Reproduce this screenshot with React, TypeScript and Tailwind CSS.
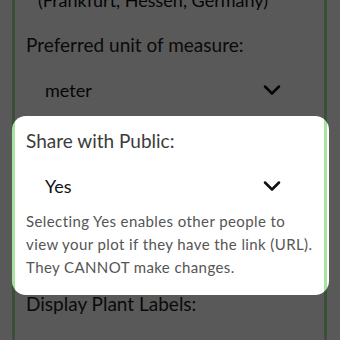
import { ChevronDown } from "lucide-react";

function Select({ value }: { value: string }) {
  return (
    <div className="flex items-center justify-between h-[44px] pl-[19px] pr-[27px] text-[18px] text-[#111]">
      <span>{value}</span>
      <ChevronDown size={28} strokeWidth={2.2} className="text-[#111]" />
    </div>
  );
}

export default function App() {
  return (
    <div className="relative w-[340px] h-[340px] overflow-hidden bg-white font-['Lato',sans-serif]">
      <div className="ml-[12px] w-[315px] h-[360px] border-x-[3px] border-[#a6e4a0] px-[11px] -mt-[13px]">
        <p className="pl-[12px] text-[18px] leading-[26px] text-[#111]">
          (Frankfurt, Hessen, Germany)
        </p>
        <p className="mt-[18px] text-[19px] leading-[28px] text-[#222]">
          Preferred unit of measure:
        </p>
        <div className="mt-[9px]">
          <Select value="meter" />
        </div>
        <div className="mt-[15px]">
          <p className="text-[19px] leading-[28px] text-[#3c3c3c]">Share with Public:</p>
          <div className="mt-[9px]">
            <Select value="Yes" />
          </div>
          <p className="mt-[2px] text-[15px] tracking-[0.4px] leading-[23px] text-[#555]">
            Selecting Yes enables other people to view your plot if they have the link (URL).
            They CANNOT make changes.
          </p>
        </div>
        <p className="mt-[11px] text-[19px] leading-[28px] text-[#222]">Display Plant Labels:</p>
      </div>
      {/* tour spotlight */}
      <div className="absolute left-[12px] top-[116px] w-[317px] h-[179px] rounded-[14px] shadow-[0_0_0_9999px_rgba(0,0,0,0.65)]" />
    </div>
  );
}
